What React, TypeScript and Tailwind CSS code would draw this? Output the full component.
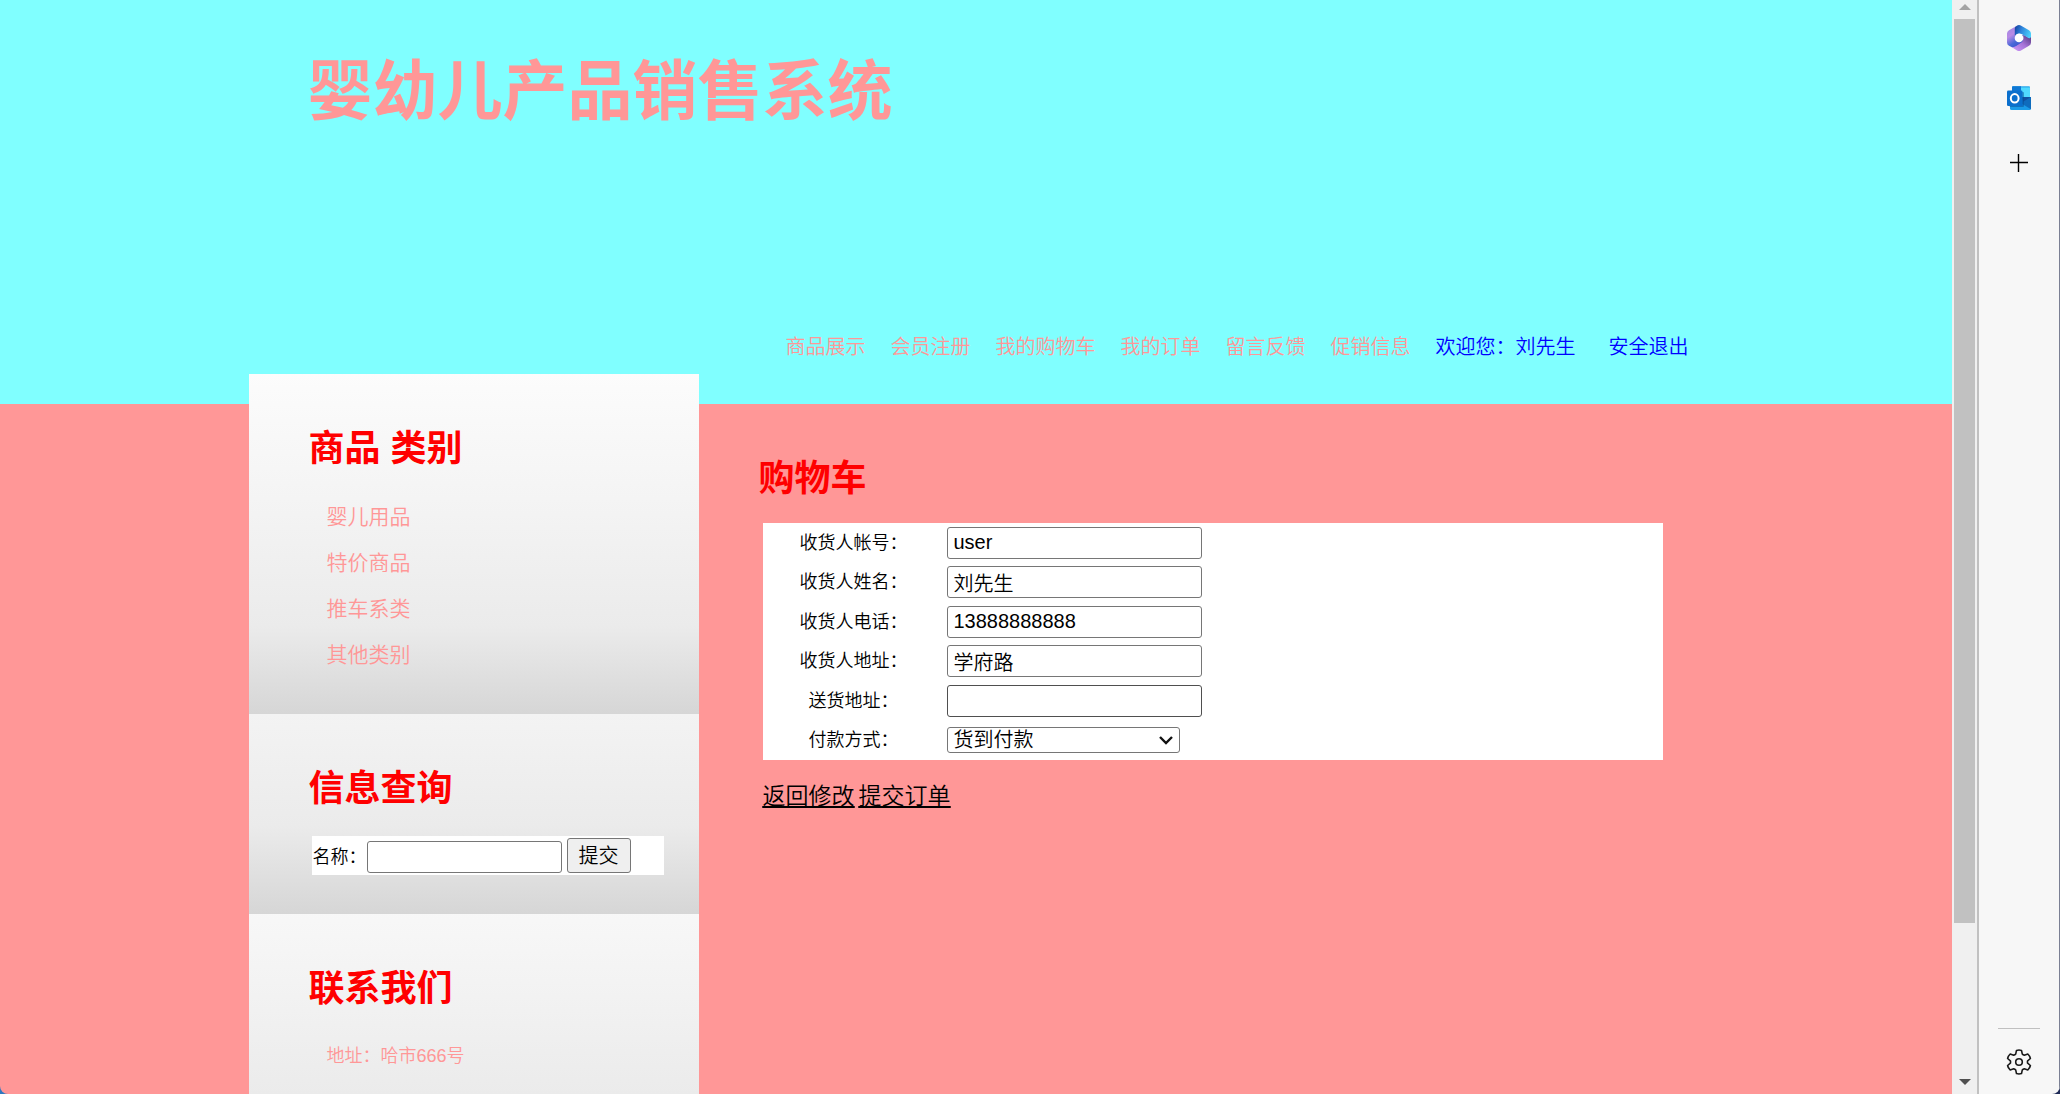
import React from "react";

const navLinks = ["商品展示", "会员注册", "我的购物车", "我的订单", "留言反馈", "促销信息"];

const categories = ["婴儿用品", "特价商品", "推车系类", "其他类别"];

const fields = [
  { id: "account", label: "收货人帐号：", value: "user" },
  { id: "name", label: "收货人姓名：", value: "刘先生" },
  { id: "phone", label: "收货人电话：", value: "13888888888" },
  { id: "address", label: "收货人地址：", value: "学府路" },
];

const inputClass =
  "block h-8 w-[255px] max-w-full rounded-[3px] border border-[#767676] bg-white px-1.5 text-xl leading-7 text-black";

const Panel = ({
  title,
  className,
  children,
}: {
  title: string;
  className: string;
  children: React.ReactNode;
}) => (
  <section
    className={`bg-[linear-gradient(to_top,#d6d6d6,#ebebeb_88px,#f3f3f3_200px,#fcfcfc_340px)] pt-[49px] pr-[35px] pl-[60px] ${className}`}
  >
    <h2 className="text-4xl leading-[52px] font-bold text-[#ff0000]">{title}</h2>
    {children}
  </section>
);

const Header = () => (
  <header className="h-[404px] bg-[#80ffff]">
    <div className="mx-auto flex h-full max-w-[1455px] flex-col justify-between">
      <h1 className="pt-11 pl-[59px] text-[65px] leading-[96px] font-bold text-[#ff9797]">
        婴幼儿产品销售系统
      </h1>
      <nav className="flex justify-end gap-[25px] pr-[15px] pb-[43px] text-xl leading-7 text-[#ff9797]">
        {navLinks.map((link) => (
          <a key={link} href="#">
            {link}
          </a>
        ))}
        <span className="text-[#0000ff]">欢迎您：刘先生</span>
        <a href="#" className="ml-2 text-[#0000ff]">
          安全退出
        </a>
      </nav>
    </div>
  </header>
);

const Sidebar = () => (
  <aside className="-mt-[30px] w-[450px] shrink-0">
    <Panel title="商品 类别" className="h-[340px]">
      <ul className="mt-[19px] pl-[18px] text-[21px] leading-[46px] text-[#ff9797]">
        {categories.map((item) => (
          <li key={item}>
            <a href="#">{item}</a>
          </li>
        ))}
      </ul>
    </Panel>
    <Panel title="信息查询" className="h-[200px]">
      <form
        className="mt-[21px] ml-[3px] flex h-[39px] items-end bg-white pb-0.5 text-lg text-black"
        onSubmit={(e) => e.preventDefault()}
      >
        <label htmlFor="keyword" className="w-[55px] pl-px leading-8">
          名称：
        </label>
        <input
          id="keyword"
          type="text"
          className="h-8 w-[195px] rounded-[3px] border border-[#767676] bg-white px-1.5 text-xl"
        />
        <button
          type="submit"
          className="ml-[5px] h-[35px] w-16 rounded-[3px] border border-[#767676] bg-[#efefef] text-xl leading-7"
        >
          提交
        </button>
      </form>
    </Panel>
    <Panel title="联系我们" className="h-[268px]">
      <p className="mt-6 pl-[18px] text-lg leading-[34px] text-[#ff9797]">地址：哈市666号</p>
    </Panel>
  </aside>
);

const Cart = () => (
  <main className="min-w-0 flex-1 pt-[49px] pr-[41px] pl-[60px]">
    <h2 className="text-4xl leading-[52px] font-bold text-[#ff0000]">购物车</h2>
    <form className="mt-[18px] ml-1" onSubmit={(e) => e.preventDefault()}>
      <table className="h-[237px] w-full bg-white text-lg text-black">
        <tbody>
          {fields.map((f) => (
            <tr key={f.id} className="h-[39px]">
              <td className="w-[184px] pr-0.5 text-center">
                <label htmlFor={f.id}>{f.label}</label>
              </td>
              <td>
                <input id={f.id} type="text" defaultValue={f.value} className={inputClass} />
              </td>
            </tr>
          ))}
          <tr className="h-[39px]">
            <td className="pr-0.5 text-center">
              <label htmlFor="delivery">送货地址：</label>
            </td>
            <td>
              <input
                id="delivery"
                type="text"
                className="block h-8 w-[255px] max-w-full rounded-[3px] border border-[#4f4f4f] bg-white px-1.5 text-xl"
              />
            </td>
          </tr>
          <tr className="h-[39px]">
            <td className="pr-0.5 text-center">
              <label htmlFor="payment">付款方式：</label>
            </td>
            <td>
              <div className="relative w-[233px]">
                <select
                  id="payment"
                  className="block h-[26px] w-full appearance-none rounded-[3px] border border-[#767676] bg-white px-1.5 text-xl leading-6"
                >
                  <option>货到付款</option>
                </select>
                <svg
                  className="pointer-events-none absolute top-2 right-1.5 h-2.5 w-4"
                  viewBox="0 0 16 10"
                  fill="none"
                  stroke="#111"
                  strokeWidth="2.4"
                >
                  <path d="M2 2l6 6 6-6" />
                </svg>
              </div>
            </td>
          </tr>
        </tbody>
      </table>
      <div className="mt-5 flex gap-1 text-[23px] leading-8 text-black underline">
        <a href="#">返回修改</a>
        <a href="#">提交订单</a>
      </div>
    </form>
  </main>
);

const ScrollTrack = () => (
  <div className="flex w-[25px] shrink-0 flex-col items-center bg-[#f0f0f0]">
    <svg className="h-[19px] w-3 shrink-0" viewBox="0 0 12 19">
      <path d="M6 4l6 6H0z" fill="#a3a3a3" />
    </svg>
    <div className="w-[21px] flex-1 bg-[#c1c1c1]" />
    <div className="flex h-[171px] items-end">
      <svg className="h-[19px] w-3" viewBox="0 0 12 19">
        <path d="M6 10l6-6H0z" fill="#505050" />
      </svg>
    </div>
  </div>
);

const OfficeIcon = () => (
  <svg width="24" height="26" viewBox="0 0 24 26">
    <defs>
      <linearGradient id="o1" x1="0" y1="0" x2="0.5" y2="1">
        <stop offset="0" stopColor="#9d86e0" />
        <stop offset="0.45" stopColor="#b98be6" />
        <stop offset="0.8" stopColor="#4a68d8" />
        <stop offset="1" stopColor="#3d5bd0" />
      </linearGradient>
      <linearGradient id="o2" x1="0" y1="0.3" x2="1" y2="0.6">
        <stop offset="0" stopColor="#1747a6" />
        <stop offset="0.4" stopColor="#2f86dc" />
        <stop offset="1" stopColor="#4bd0fb" />
      </linearGradient>
      <linearGradient id="o3" x1="0" y1="1" x2="1" y2="0">
        <stop offset="0" stopColor="#d09bfb" />
        <stop offset="0.5" stopColor="#a774d8" />
        <stop offset="1" stopColor="#4d3278" />
      </linearGradient>
    </defs>
    <path
      d="M9.5 1L2 5.2Q0 6.5 0 8.6V17.4Q0 19.6 2 20.8L5 22.2Q7.5 22.8 9.5 21.5L16 17.3V10H8Z"
      fill="url(#o1)"
    />
    <path
      d="M24 11.5V17.4Q24 19.6 22 20.8L14 25.4Q12 26.5 10 25.4L4.500 22Q7 22.5 9.2 21L14.5 17.5Q16.2 16.3 16.2 14V9.5L22 13Z"
      fill="url(#o3)"
    />
    <path
      d="M7.8 10.5V3.5Q7.8 1.5 9.5 0.9Q12 -0.6 14.2 0.8L22 5.2Q24 6.5 24 8.6V11.5Q23.7 14 21.5 12.9L15 9.2Q12 7.5 9.5 9.4Z"
      fill="url(#o2)"
    />
    <circle cx="12" cy="13" r="4.3" fill="#fff" />
  </svg>
);

const OutlookIcon = () => (
  <svg width="24" height="24" viewBox="0 0 24 24">
    <path d="M5 1.2Q5 0.2 6 0.2H22Q23 0.2 23 1.2V13H5Z" fill="#28a8ea" />
    <path d="M5 1.2Q5 0.2 6 0.2H14V6H5Z" fill="#0f78d4" />
    <path d="M14 1.5H23V11H14Z" fill="#50d9ff" />
    <path d="M5 6H14V12H5Z" fill="#0364b8" />
    <path d="M3 11H24V22.5Q24 24 22.5 24H4.5Q3 24 3 22.5Z" fill="#1a9be8" />
    <path d="M24 11V23.3L12 16Z" fill="#0f6cbd" />
    <path d="M12 11H24L16.5 15.5Z" fill="#1150a0" />
    <rect x="2.5" y="6" width="14.5" height="15" rx="1" fill="#084c91" opacity="0.5" />
    <rect x="0" y="4.6" width="15.5" height="15.5" rx="1.3" fill="#0a6fcd" />
    <ellipse cx="7.7" cy="12.3" rx="3.9" ry="4.2" fill="none" stroke="#fff" strokeWidth="2" />
  </svg>
);

const BrowserRail = () => (
  <div className="flex w-[83px] shrink-0 flex-col items-center border-r border-l-2 border-r-[#7b8094] border-l-[#c1c1c1] bg-[#f7f7f7] pt-[25px] pb-[19px]">
    <button type="button" aria-label="Microsoft 365">
      <OfficeIcon />
    </button>
    <button type="button" aria-label="Outlook" className="mt-[35px]">
      <OutlookIcon />
    </button>
    <button type="button" aria-label="添加" className="mt-11">
      <svg width="18" height="18" viewBox="0 0 18 18" stroke="#000" strokeWidth="1.4">
        <path d="M8.5 0v18M0 8.500h18" />
      </svg>
    </button>
    <div className="mt-auto h-px w-[42px] bg-[#c0c0c0]" />
    <button type="button" aria-label="设置" className="mt-5">
      <svg
        width="26"
        height="26"
        viewBox="-13 -13 26 26"
        fill="none"
        stroke="#1a1a1a"
        strokeWidth="1.6"
        strokeLinejoin="round"
      >
        <path d="M-3.26 -8.07L-2.5 -11.6Q0 -12.4 2.5 -11.6L3.26 -8.07Q4 -7.1 5.36 -6.86L8.8 -8Q11 -6 11.4 -3.5L8.62 -1.21Q8.3 0 8.62 1.21L11.4 3.5Q11 6 8.8 8L5.36 6.86Q4 7.1 3.26 8.07L2.5 11.6Q0 12.4 -2.5 11.6L-3.26 8.07Q-4 7.1 -5.36 6.86L-8.8 8Q-11 6 -11.4 3.5L-8.62 1.21Q-8.3 0 -8.62 -1.21L-11.4 -3.5Q-11 -6 -8.8 -8L-5.36 -6.86Q-4 -7.1 -3.26 -8.07Z" />
        <circle r="3.3" />
      </svg>
    </button>
  </div>
);

const App = () => {
  return (
    <div className="h-screen bg-linear-to-r from-[#2f78c0] to-[#1f2b57] font-['Liberation_Sans','Noto_Sans_CJK_SC',sans-serif] font-[350]">
      <div className="flex h-full overflow-hidden rounded-b-lg">
        <div className="min-w-0 flex-1 overflow-hidden bg-[#ff9797]">
          <Header />
          <div className="mx-auto flex max-w-[1455px] items-start">
            <Sidebar />
            <Cart />
          </div>
        </div>
        <ScrollTrack />
        <BrowserRail />
      </div>
    </div>
  );
};

export default App;
